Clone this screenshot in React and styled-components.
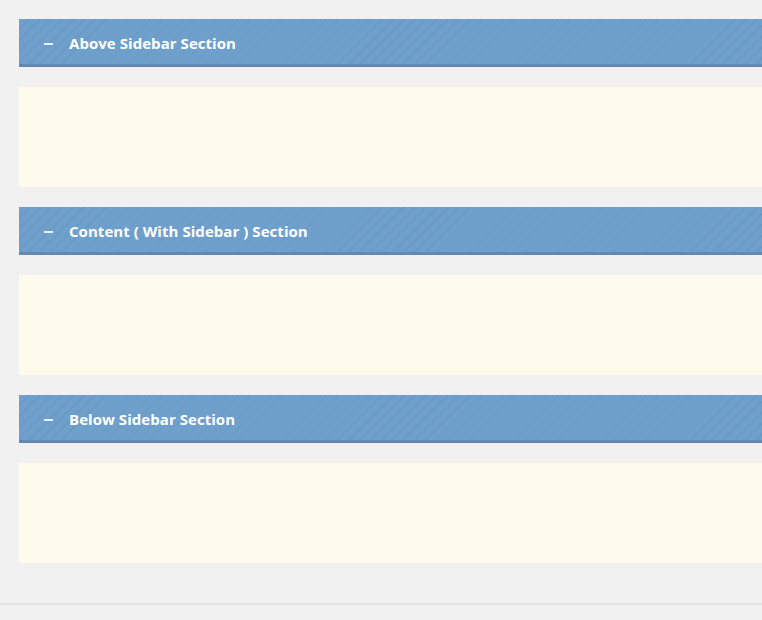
import React from 'react'
import styled, { createGlobalStyle } from 'styled-components';

const Global = createGlobalStyle`
  html, body {
    margin: 0;
    padding: 0;
    background: #f1f1f1;
    font-family: "Open Sans", "Liberation Sans", sans-serif;
  }
`;

const Page = styled.div`
  width: 762px;
  height: 620px;
  overflow: hidden;
  background: #f1f1f1;
`;

const Wrapper = styled.div`
  padding: 19px 0 0 19px;
  display: flex;
  flex-direction: column;
  gap: 20px;
`;

const Section = styled.div`
  display: flex;
  flex-direction: column;
  gap: 20px;
`;

const Header = styled.div`
  height: 45px;
  display: flex;
  align-items: center;
  background-color: #6fa0cc;
  background-image: repeating-linear-gradient(
    135deg,
    transparent 0px,
    transparent 6.9px,
    rgba(40, 70, 110, 0.09) 6.9px,
    rgba(40, 70, 110, 0.09) 7.8px
  );
  border-bottom: 3px solid #6489b0;
  color: #fff;
  font-size: 15px;
  font-weight: 700;
  padding-left: 25px;
`;

const Dash = styled.span`
  width: 9px;
  height: 2px;
  background: rgba(255, 255, 255, 0.85);
  margin-right: 16px;
  margin-top: 4px;
`;

const Title = styled.span`
  letter-spacing: 0.05px;
  margin-top: 3px;
`;

const Body = styled.div`
  height: 100px;
  background: #fffbec;
`;

const Footer = styled.div`
  margin-top: 40px;
  border-top: 2px solid #e2e2e2;
  height: 20px;
`;

const sections = [
  'Above Sidebar Section',
  'Content ( With Sidebar ) Section',
  'Below Sidebar Section',
];

const App = () => {
  return (
    <Page>
      <Global />
      <Wrapper>
        {sections.map((s) => (
          <Section key={s}>
            <Header>
              <Dash />
              <Title>{s}</Title>
            </Header>
            <Body />
          </Section>
        ))}
      </Wrapper>
      <Footer />
    </Page>
  )
}

export default App;
